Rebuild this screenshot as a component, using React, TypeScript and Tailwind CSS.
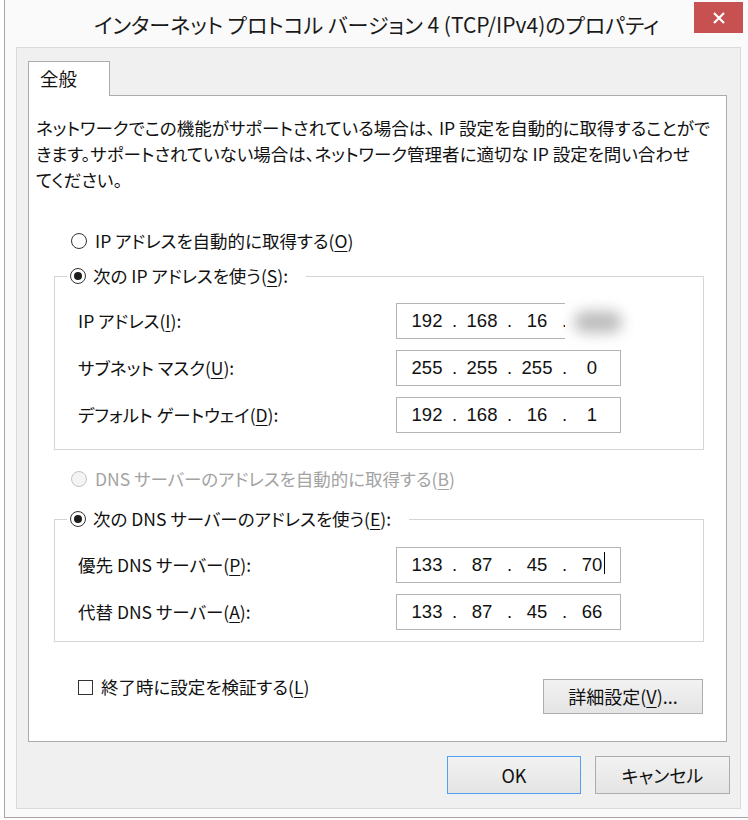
import React from 'react';

// Windows 8 style "IPv4 properties" dialog

const jp = "font-['Noto_Sans_CJK_JP','Noto_Sans',sans-serif] [font-feature-settings:'palt']";

function Radio({ checked = false, disabled = false }: { checked?: boolean; disabled?: boolean }) {
  return (
    <span
      className={`inline-flex h-[16px] w-[16px] shrink-0 items-center justify-center rounded-full border ${
        disabled ? 'border-[#c4c4c4] bg-[#f4f4f4]' : 'border-[#333333] bg-white'
      }`}
    >
      {checked && <span className="h-[8px] w-[8px] rounded-full bg-[#1c1c1c]" />}
    </span>
  );
}

function Acc({ children }: { children: React.ReactNode }) {
  return <span className="underline underline-offset-[3px]">{children}</span>;
}

function IpBox({ parts, caret = false, blur = false }: { parts: string[]; caret?: boolean; blur?: boolean }) {
  return (
    <div className="relative flex h-[36px] w-[225px] items-center border border-[#b4b4b4] bg-white pl-[5px] font-['Liberation_Sans',Arial,sans-serif] text-[18.5px] text-[#111]">
      {parts.map((p, i) => (
        <React.Fragment key={i}>
          {i > 0 && <span className="w-[5px] text-center">.</span>}
          <span className="w-[50px] text-center">
            <span className="relative inline-block">
              {p}
              {caret && i === 3 && (
                <span className="absolute right-[-3px] top-[1px] h-[22px] w-px bg-black" />
              )}
            </span>
          </span>
        </React.Fragment>
      ))}
      {blur && (
        <div className="absolute left-[168px] top-[-2px] flex h-[40px] w-[66px] items-center justify-center bg-white">
          <div className="h-[22px] w-[48px] rounded-full bg-[#bdbdbd] blur-[7px]" />
        </div>
      )}
    </div>
  );
}

function Btn({ children, primary = false, className = '' }: { children: React.ReactNode; primary?: boolean; className?: string }) {
  return (
    <div
      className={`flex items-center justify-center border bg-linear-to-b from-[#f2f2f2] to-[#e4e4e4] text-[18px] text-[#111] ${
        primary ? 'border-[#4ea2f0]' : 'border-[#adadad]'
      } ${className}`}
    >
      {children}
    </div>
  );
}

export default function App() {
  return (
    <div className={`h-[820px] w-[748px] overflow-hidden bg-white ${jp}`}>
      <div className="ml-[4px] h-[818px] border-b border-l border-[#a6a6a6] bg-[#fafafa]">
        {/* title bar */}
        <div className="relative flex h-[47px] items-center justify-center pt-[2px] text-[21px] text-[#1a1a1a]">
          インターネット プロトコル バージョン 4 (TCP/IPv4)のプロパティ
          <div className="absolute right-[5px] top-[2px] flex h-[31px] w-[49px] items-center justify-center bg-[#c75050]">
            <svg width="14" height="12" viewBox="0 0 14 12">
              <path d="M2 1 L12 11 M12 1 L2 11" stroke="white" strokeWidth="2.2" />
            </svg>
          </div>
        </div>

        {/* client area */}
        <div className="ml-[11px] flex h-[762px] w-[725px] flex-col border border-[#dadada] bg-[#f0f0f0] pl-[11px] pt-[13px]">
          <div className="relative z-10 -mb-px flex h-[35px] w-[82px] items-center border-l border-r border-t border-[#acacac] bg-white pl-[11px] text-[18.5px] text-[#111]">
            全般
          </div>
          <div className="flex h-[647px] w-[699px] flex-col border border-[#acacac] bg-white text-[17.5px] text-[#111]">
            <p className="whitespace-nowrap pl-[7px] pt-[19px] leading-[26px]">
              ネットワークでこの機能がサポートされている場合は、 IP 設定を自動的に取得することがで
              <br />
              きます。サポートされていない場合は、ネットワーク管理者に適切な IP 設定を問い合わせ
              <br />
              てください。
            </p>

            <div className="ml-[42px] mt-[35px] flex h-[26px] items-center gap-[8px]">
              <Radio />
              <span>
                IP アドレスを自動的に取得する(<Acc>O</Acc>)
              </span>
            </div>

            <fieldset className="ml-[25px] mt-[9px] w-[650px] border border-[#d5d5d5]">
              <legend className="ml-[12px] flex h-[26px] items-center gap-[7px] pl-[3px] pr-[18px]">
                <Radio checked />
                <span>
                  次の IP アドレスを使う(<Acc>S</Acc>):
                </span>
              </legend>
              <div className="grid grid-cols-[318px_225px] items-center gap-y-[11px] pb-[16px] pl-[23px] pt-[14px]">
                <span>
                  IP アドレス(<Acc>I</Acc>):
                </span>
                <IpBox parts={['192', '168', '16', '']} blur />
                <span>
                  サブネット マスク(<Acc>U</Acc>):
                </span>
                <IpBox parts={['255', '255', '255', '0']} />
                <span>
                  デフォルト ゲートウェイ(<Acc>D</Acc>):
                </span>
                <IpBox parts={['192', '168', '16', '1']} />
              </div>
            </fieldset>

            <div className="ml-[42px] mt-[16px] flex h-[26px] items-center gap-[8px] text-[#a3a3a3]">
              <Radio disabled />
              <span>
                DNS サーバーのアドレスを自動的に取得する(<Acc>B</Acc>)
              </span>
            </div>

            <fieldset className="ml-[25px] mt-[14px] w-[650px] border border-[#d5d5d5]">
              <legend className="ml-[12px] flex h-[26px] items-center gap-[7px] pl-[3px] pr-[18px]">
                <Radio checked />
                <span>
                  次の DNS サーバーのアドレスを使う(<Acc>E</Acc>):
                </span>
              </legend>
              <div className="grid grid-cols-[318px_225px] items-center gap-y-[11px] pb-[11px] pl-[23px] pt-[15px]">
                <span>
                  優先 DNS サーバー(<Acc>P</Acc>):
                </span>
                <IpBox parts={['133', '87', '45', '70']} caret />
                <span>
                  代替 DNS サーバー(<Acc>A</Acc>):
                </span>
                <IpBox parts={['133', '87', '45', '66']} />
              </div>
            </fieldset>

            <div className="mt-[32px] flex items-start justify-between pl-[49px] pr-[23px]">
              <div className="flex h-[26px] items-center gap-[8px]">
                <span className="h-[15px] w-[15px] border border-[#333333] bg-white" />
                <span>
                  終了時に設定を検証する(<Acc>L</Acc>)
                </span>
              </div>
              <Btn className="mt-[5px] h-[35px] w-[160px]">
                詳細設定(<Acc>V</Acc>)...
              </Btn>
            </div>
          </div>

          <div className="mr-[10px] mt-[14px] flex justify-end gap-[14px]">
            <Btn primary className="h-[38px] w-[134px]">
              OK
            </Btn>
            <Btn className="h-[38px] w-[135px]">キャンセル</Btn>
          </div>
        </div>
      </div>
    </div>
  );
}
